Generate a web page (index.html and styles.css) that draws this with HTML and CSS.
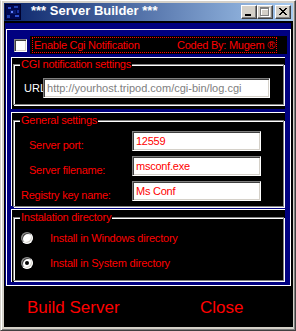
FILE: index.html
```html
<!DOCTYPE html>
<html lang="en">
<head>
  <meta charset="UTF-8">
  <meta name="viewport" content="width=device-width, initial-scale=1.0">
  <title>*** Server Builder ***</title>
  <link rel="stylesheet" href="styles.css">
</head>
<body>
  <div class="window">
    <div class="titlebar">
      <svg class="app-icon" width="16" height="16" viewBox="0 0 16 16" shape-rendering="crispEdges">
        <rect width="16" height="16" fill="#00002a"/>
        <rect x="1" y="1" width="14" height="14" fill="#000850"/>
        <rect x="3" y="3" width="3" height="2" fill="#3050d0"/>
        <rect x="9" y="2" width="4" height="2" fill="#2040b0"/>
        <rect x="5" y="6" width="6" height="4" fill="#0a1a70"/>
        <rect x="6" y="7" width="2" height="2" fill="#6080ff"/>
        <rect x="2" y="11" width="3" height="3" fill="#2040b0"/>
        <rect x="10" y="11" width="4" height="2" fill="#3050d0"/>
        <rect x="12" y="6" width="2" height="3" fill="#1830a0"/>
      </svg>
      <span class="title">*** Server Builder ***</span>
      <div class="caption-buttons">
        <span class="cap-btn">
          <svg width="14" height="12" viewBox="0 0 14 12" shape-rendering="crispEdges">
            <rect x="3" y="8" width="6" height="2" fill="#000"/>
          </svg>
        </span>
        <span class="cap-btn">
          <svg width="14" height="12" viewBox="0 0 14 12" shape-rendering="crispEdges">
            <path d="M3 2h9v9h-9z M4 4v6h7v-6z" fill="#fff" fill-rule="evenodd"/>
            <path d="M2 1h9v9h-9z M3 3v6h7v-6z" fill="#808080" fill-rule="evenodd"/>
          </svg>
        </span>
        <span class="cap-btn close">
          <svg width="14" height="12" viewBox="0 0 14 12" shape-rendering="crispEdges">
            <path d="M3 2h2v1h-2z M9 2h2v1h-2z M4 3h2v1h-2z M8 3h2v1h-2z M5 4h4v1h-4z M6 5h2v1h-2z M5 6h4v1h-4z M4 7h2v1h-2z M8 7h2v1h-2z M3 8h2v1h-2z M9 8h2v1h-2z" fill="#000"/>
          </svg>
        </span>
      </div>
    </div>

    <div class="client">
      <div class="navy">
        <div class="frame">

          <div class="notify-row">
            <span class="checkbox"></span>
            <div class="notify-label">
              <div class="focus-rect">
                <span>Enable Cgi Notification</span>
                <span>Coded By: Mugem ®</span>
              </div>
            </div>
          </div>

          <div class="panel panel-cgi">
            <fieldset>
              <legend>CGI notification settings</legend>
              <div class="url-row">
                <span class="url-label">URL</span>
                <div class="textbox url-box">http://yourhost.tripod.com/cgi-bin/log.cgi</div>
              </div>
            </fieldset>
          </div>

          <div class="panel panel-general">
            <fieldset>
              <legend>General settings</legend>
              <div class="settings-grid">
                <span class="field-label">Server port:</span>
                <div class="textbox">12559</div>
                <span class="field-label">Server filename:</span>
                <div class="textbox">msconf.exe</div>
                <span class="field-label wide">Registry key name:</span>
                <div class="textbox">Ms Conf</div>
              </div>
            </fieldset>
          </div>

          <div class="panel panel-install">
            <fieldset>
              <legend>Instalation directory</legend>
              <div class="radio-row">
                <span class="radio"></span>
                <span class="radio-text">Install in Windows directory</span>
              </div>
              <div class="radio-row">
                <span class="radio checked"></span>
                <span class="radio-text">Install in System directory</span>
              </div>
            </fieldset>
          </div>

        </div>
      </div>

      <div class="actions">
        <span class="action build">Build Server</span>
        <span class="action">Close</span>
      </div>
    </div>
  </div>
</body>
</html>
```

FILE: styles.css
```css
* {
  margin: 0;
  padding: 0;
  box-sizing: border-box;
}

body {
  background: #d4d0c8;
  font-family: "Liberation Sans", Arial, sans-serif;
  font-size: 11px;
  color: #ff0000;
}

/* Window chrome */
.window {
  width: 296px;
  height: 331px;
  background: #d4d0c8;
  border: 1px solid;
  border-color: #fff #404040 #404040 #d4d0c8;
  box-shadow: inset 1px 0 #fff, inset -1px -1px #808080;
  padding: 2px 2px 3px 3px;
}

.titlebar {
  display: flex;
  align-items: flex-start;
  height: 18px;
  background: linear-gradient(to right, #0a246a, #a6caf0);
}

.app-icon {
  display: block;
  margin: 1px 0 0 1px;
}

.title {
  margin-left: 10px;
  font-size: 13px;
  line-height: 15px;
  font-weight: bold;
  color: #fff;
  white-space: nowrap;
}

.caption-buttons {
  display: flex;
  margin: 2px 2px 0 auto;
}

.cap-btn {
  display: block;
  width: 16px;
  height: 14px;
  background: #d4d0c8;
  border: 1px solid;
  border-color: #fff #404040 #404040 #fff;
  box-shadow: inset -1px -1px #808080;
}

.cap-btn svg {
  display: block;
}

.cap-btn.close {
  margin-left: 2px;
}

/* Client area */
.client {
  height: 306px;
  background: #000;
  padding-top: 2px;
}

.navy {
  height: 263px;
  margin: 0 2px 0 1px;
  background: #000080;
  padding: 6px 0 0 1px;
}

.frame {
  height: 257px;
  border: 1px solid #fff;
}

.notify-row {
  display: flex;
  align-items: flex-start;
  margin-top: 6px;
  height: 18px;
}

.checkbox {
  width: 13px;
  height: 13px;
  margin: 3px 0 0 7px;
  background: #fff;
  border: 1px solid;
  border-color: #808080 #fff #fff #808080;
  box-shadow: inset 1px 1px #404040, inset -1px -1px #d4d0c8;
}

.notify-label {
  width: 257px;
  height: 18px;
  margin-left: 3px;
  background: #000;
  padding: 1px 0 0 2px;
}

.focus-rect {
  display: flex;
  justify-content: space-between;
  width: 245px;
  height: 16px;
  border: 1px dotted #ff0000;
  padding: 0 1px;
  line-height: 14px;
  letter-spacing: -0.25px;
  white-space: nowrap;
}

/* Framed sections */
.panel {
  width: 274px;
  margin-left: 4px;
  background: #000;
  border-top: 1px solid #fff;
  border-left: 1px solid #fff;
  padding: 0 1px 0 1px;
}

.panel-cgi {
  height: 52px;
  margin-top: 3px;
  padding-bottom: 4px;
}

.panel-general {
  height: 94px;
  margin-top: 3px;
  padding-top: 1px;
}

.panel-install {
  height: 73px;
  margin-top: 3px;
  padding-top: 1px;
}

fieldset {
  margin: 0;
  padding: 0;
  min-width: 0;
  border: 1px solid #808080;
  box-shadow: inset 1px 1px #fff, 1px 1px #fff;
}

legend {
  margin-left: 6px;
  padding: 0 1px;
  background: #000;
  line-height: 13px;
  letter-spacing: -0.25px;
}

.url-row {
  display: flex;
  align-items: center;
  margin-top: 7px;
  margin-bottom: 6px;
  padding-left: 10px;
}

.url-label {
  color: #fff;
  line-height: 13px;
  white-space: nowrap;
}

.textbox {
  height: 20px;
  background: #fff;
  border: 1px solid;
  border-color: #808080 #fff #fff #808080;
  box-shadow: inset 1px 1px #404040, inset -1px -1px #d4d0c8;
  padding: 0 3px;
  line-height: 18px;
  letter-spacing: -0.25px;
  white-space: nowrap;
  overflow: hidden;
}

.url-box {
  width: 227px;
  margin-left: -3px;
  color: #808080;
  letter-spacing: 0;
}

.settings-grid {
  display: grid;
  grid-template-columns: 118px 129px;
  row-gap: 4px;
  margin: 4px 0 4px;
}

.field-label {
  padding: 8px 0 0 15px;
  line-height: 13px;
  letter-spacing: -0.25px;
  white-space: nowrap;
}

.field-label.wide {
  padding-left: 7px;
}

.radio-row {
  display: flex;
  align-items: center;
  height: 12px;
  margin-top: 8px;
  padding-left: 7px;
}

.radio-row + .radio-row {
  margin-top: 13px;
  margin-bottom: 11px;
}

.radio {
  display: flex;
  align-items: center;
  justify-content: center;
  width: 12px;
  height: 12px;
  border-radius: 50%;
  background: #fff;
  border: 1px solid;
  border-color: #808080 #fff #fff #808080;
  box-shadow: inset 1px 1px #404040, inset -1px -1px #d4d0c8;
}

.radio.checked::after {
  content: "";
  width: 4px;
  height: 4px;
  border-radius: 50%;
  background: #000;
}

.radio-text {
  margin-left: 17px;
  line-height: 13px;
  letter-spacing: -0.2px;
  white-space: nowrap;
}

/* Bottom commands */
.actions {
  display: flex;
  padding: 12px 0 0 23px;
  font-size: 17px;
  line-height: 19px;
}

.action.build {
  width: 173px;
}
```
